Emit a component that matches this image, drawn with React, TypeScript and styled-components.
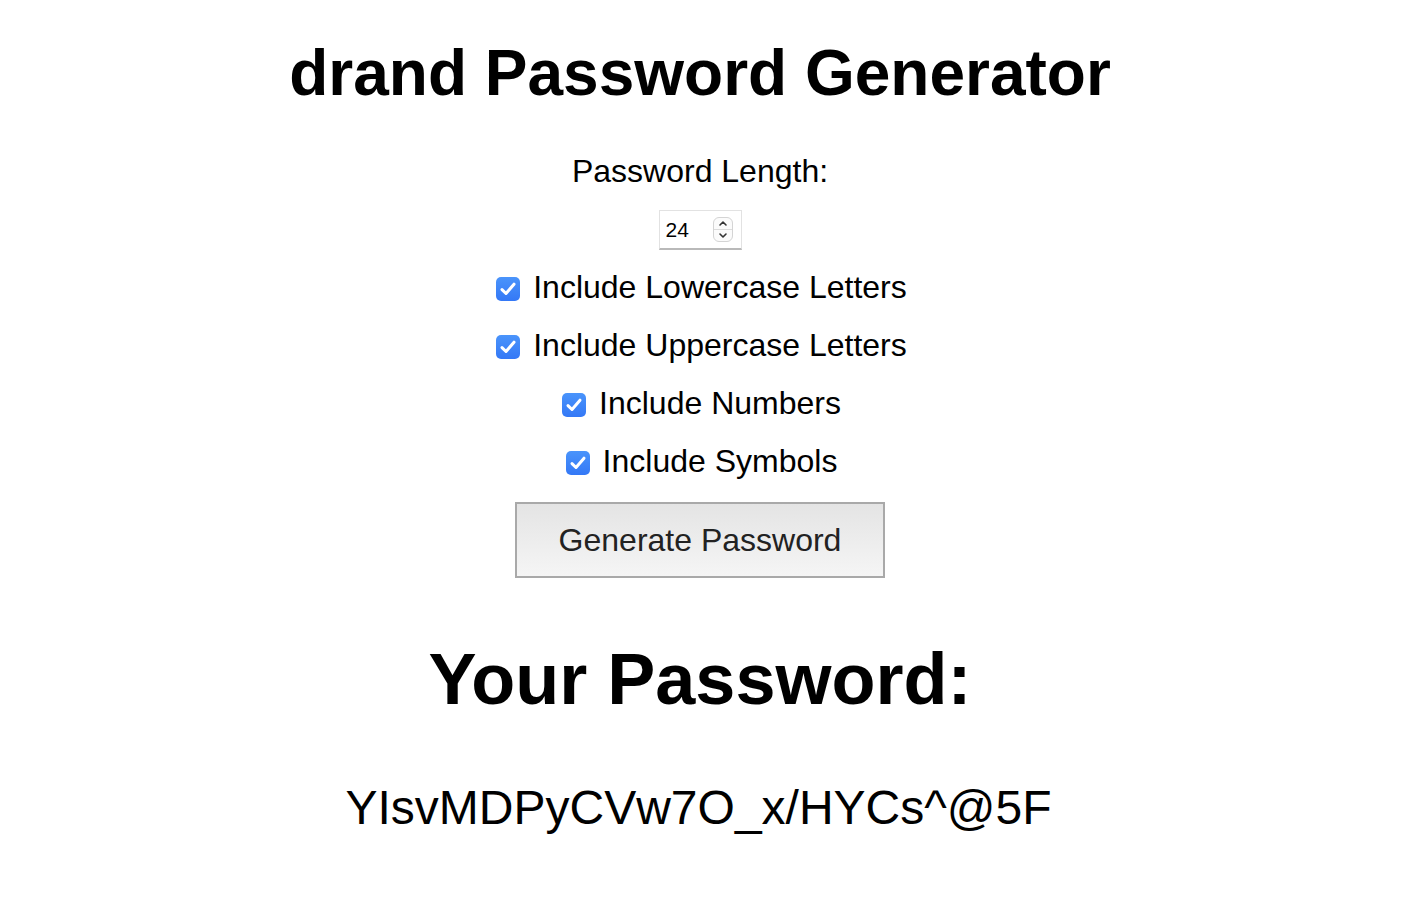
import React, { useState } from "react";
import styled, { createGlobalStyle } from "styled-components";

const GlobalStyle = createGlobalStyle`
  html, body {
    margin: 0;
    padding: 0;
    background: #ffffff;
  }
  body {
    font-family: "Liberation Sans", Arial, Helvetica, sans-serif;
    color: #000000;
  }
`;

const Page = styled.main`
  width: 1400px;
  display: flex;
  flex-direction: column;
  align-items: center;
  padding-top: 36px;
`;

const Title = styled.h1`
  margin: 0;
  font-size: 64px;
  font-weight: 700;
  line-height: normal;
`;

const FieldLabel = styled.label`
  margin-top: 43px;
  font-size: 32px;
  line-height: normal;
`;

const NumberField = styled.div`
  margin-top: 20px;
  width: 83px;
  height: 40px;
  box-sizing: border-box;
  display: flex;
  align-items: center;
  border: 1px solid #e2e2e2;
  border-bottom: 2px solid #b9b9b9;
  background: #fff;
`;

const NumberInput = styled.input`
  width: 40px;
  border: none;
  outline: none;
  padding: 0 0 0 6px;
  font-family: "Liberation Sans", Arial, Helvetica, sans-serif;
  font-size: 21px;
  color: #000;
  background: transparent;
`;

const Spinner = styled.div`
  margin-left: 7px;
  width: 20px;
  height: 25px;
  box-sizing: border-box;
  border: 1px solid #d4d4d4;
  border-radius: 6px;
  display: flex;
  flex-direction: column;
  overflow: hidden;
  background: #fbfbfb;
`;

const SpinHalf = styled.div<{ $top?: boolean }>`
  flex: 1;
  display: flex;
  align-items: center;
  justify-content: center;
  border-bottom: ${(p) => (p.$top ? "1px solid #dcdcdc" : "none")};
`;

const Options = styled.div`
  margin-top: 19px;
  display: flex;
  flex-direction: column;
  align-items: center;
  gap: 21px;
`;

const OptionRow = styled.label`
  display: flex;
  align-items: center;
  gap: 13px;
  padding-left: 3px;
  font-size: 32px;
  line-height: normal;
  cursor: pointer;
`;

const Box = styled.span<{ $checked: boolean }>`
  width: 24px;
  height: 24px;
  margin-top: 3px;
  border-radius: 5px;
  box-sizing: border-box;
  display: flex;
  align-items: center;
  justify-content: center;
  background: ${(p) =>
    p.$checked ? "linear-gradient(#4a94fb, #3478f6)" : "#ffffff"};
  border: ${(p) => (p.$checked ? "none" : "1px solid #b5b5b5")};
`;

const GenerateButton = styled.button`
  margin-top: 22px;
  width: 370px;
  height: 76px;
  box-sizing: border-box;
  border: 2px solid #a9a9a9;
  background: linear-gradient(#e4e4e4, #f5f5f5);
  font-family: "Liberation Sans", Arial, Helvetica, sans-serif;
  font-size: 32px;
  color: #222222;
  cursor: pointer;
  padding: 0;
`;

const ResultTitle = styled.h2`
  margin: 60px 0 0;
  font-size: 72px;
  font-weight: 700;
  line-height: normal;
`;

const PasswordText = styled.p`
  margin: 60px 0 0;
  padding-right: 3px;
  font-size: 48px;
  line-height: normal;
`;

const Check = () => (
  <svg width="18" height="16" viewBox="0 0 18 16" fill="none">
    <path
      d="M3 8.6 L7 12.5 L15 3.2"
      stroke="#ffffff"
      strokeWidth="3"
      strokeLinecap="round"
      strokeLinejoin="round"
    />
  </svg>
);

const Chevron = ({ up }: { up?: boolean }) => (
  <svg width="10" height="7" viewBox="0 0 10 7" fill="none">
    <path
      d={up ? "M2 5 L5 2 L8 5" : "M2 2 L5 5 L8 2"}
      stroke="#333"
      strokeWidth="1.6"
      strokeLinecap="round"
      strokeLinejoin="round"
    />
  </svg>
);

const optionList = [
  { key: "lower", label: "Include Lowercase Letters" },
  { key: "upper", label: "Include Uppercase Letters" },
  { key: "numbers", label: "Include Numbers" },
  { key: "symbols", label: "Include Symbols" },
];

export default function App() {
  const [length, setLength] = useState("24");
  const [checked, setChecked] = useState<Record<string, boolean>>({
    lower: true,
    upper: true,
    numbers: true,
    symbols: true,
  });

  return (
    <>
      <GlobalStyle />
      <Page>
        <Title>drand Password Generator</Title>
        <FieldLabel htmlFor="len">Password Length:</FieldLabel>
        <NumberField>
          <NumberInput
            id="len"
            value={length}
            onChange={(e) => setLength(e.target.value)}
          />
          <Spinner>
            <SpinHalf $top>
              <Chevron up />
            </SpinHalf>
            <SpinHalf>
              <Chevron />
            </SpinHalf>
          </Spinner>
        </NumberField>
        <Options>
          {optionList.map((o) => (
            <OptionRow
              key={o.key}
              onClick={() => setChecked({ ...checked, [o.key]: !checked[o.key] })}
            >
              <Box $checked={checked[o.key]}>{checked[o.key] && <Check />}</Box>
              {o.label}
            </OptionRow>
          ))}
        </Options>
        <GenerateButton>Generate Password</GenerateButton>
        <ResultTitle>Your Password:</ResultTitle>
        <PasswordText>YIsvMDPyCVw7O_x/HYCs^@5F</PasswordText>
      </Page>
    </>
  );
}
